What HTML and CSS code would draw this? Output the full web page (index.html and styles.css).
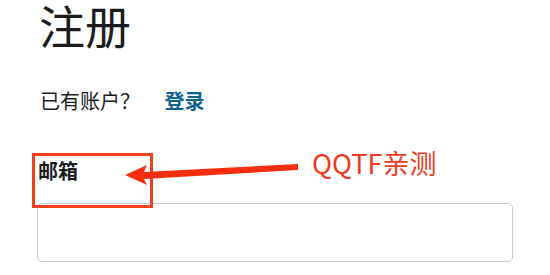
FILE: index.html
```html
<!DOCTYPE html>
<html>
<head>
    <meta charset="UTF-8">
    <title>注册</title>
    <link rel="stylesheet" href="styles.css">
</head>
<body>
    <div class="container">
        <h1 class="title">注册</h1>
        <p class="login-tip">已有账户？ <a class="login-link" href="#">登录</a></p>

        <div class="form-group">
            <label class="form-label" for="email">邮箱</label>
            <input class="form-input" type="email" id="email">

            <!-- screenshot annotation -->
            <div class="mark-box"></div>
            <svg class="mark-arrow" width="200" height="30" viewBox="0 0 200 30">
                <polygon points="0,16 22,6 19,13 173,5 173,11 19,20 22,26" fill="#f62d10"/>
            </svg>
            <span class="mark-text">QQTF亲测</span>
        </div>
    </div>
</body>
</html>
```

FILE: styles.css
```css
body {
    margin: 0;
    background: #fff;
    font-family: "Noto Sans CJK SC", "Noto Sans", sans-serif;
    color: #1d1d1f;
}

.container {
    width: 476px;
    padding: 0 0 0 37px;
}

.title {
    margin: 0;
    padding: 0 0 0 2px;
    font-size: 46px;
    font-weight: 400;
    line-height: 48px;
}

.login-tip {
    margin: 39px 0 0 0;
    padding-left: 3px;
    font-size: 20px;
    line-height: 28px;
}

.login-link {
    margin-left: 20px;
    color: #0f6391;
    font-weight: 700;
    text-decoration: none;
}

.form-group {
    position: relative;
    margin-top: 42px;
}

.form-label {
    display: block;
    padding-left: 1px;
    font-size: 20px;
    font-weight: 700;
    line-height: 28px;
}

.form-input {
    display: block;
    box-sizing: border-box;
    width: 476px;
    height: 59px;
    margin-top: 18px;
    border: 1px solid #c9c9c9;
    border-radius: 5px;
}

.mark-box {
    position: absolute;
    left: -5px;
    top: -4px;
    width: 115px;
    height: 49px;
    border: 3px solid #f0401c;
}

.mark-arrow {
    position: absolute;
    left: 88px;
    top: 2px;
}

.mark-text {
    position: absolute;
    left: 275px;
    top: -12px;
    color: #ee3a1e;
    font-size: 27px;
    line-height: 36px;
    white-space: nowrap;
}
```
